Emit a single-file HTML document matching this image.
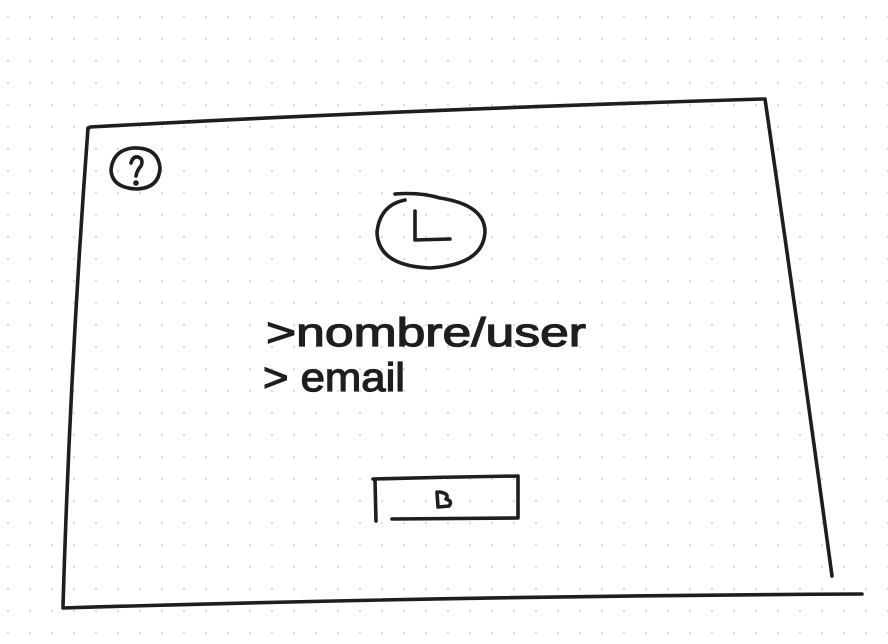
<!DOCTYPE html>
<html><head><meta charset="utf-8"><style>
html,body{margin:0;padding:0;background:#fff;width:888px;height:644px;overflow:hidden}
svg{display:block}
</style></head><body>
<svg width="888" height="644" viewBox="0 0 888 644" xmlns="http://www.w3.org/2000/svg">
<defs><pattern id="d" x="-3" y="6" width="22" height="22" patternUnits="userSpaceOnUse"><circle cx="11" cy="11" r="1.2" fill="#dcdcdc"/></pattern></defs>
<rect width="888" height="644" fill="url(#d)"/>
<g fill="none" stroke="#1e1e1e" stroke-width="3.6" stroke-linecap="round" stroke-linejoin="round">
<path d="M88 129 L90 127 Q400 110 763 99"/>
<path d="M765 99 Q800 340 832 576"/>
<path d="M88 128 Q70 370 63 606"/>
<path d="M63 608 Q460 596 862 594"/>
<path d="M133 148 Q113 150 111 170 Q112 188 137 189 Q159 188 160 168 Q158 147 133 148"/>
<path d="M131 163 Q133 156 138 157 Q144 159 141 166 Q137 170 136 176"/>
<circle cx="136" cy="183" r="1" fill="#1e1e1e"/>
<path d="M395 194 Q420 192 440 198 Q485 205 485 232 Q483 265 430 268 Q378 266 377 232 Q380 205 405 200"/>
<path d="M415 211 L415 240 L450 239"/>
<path d="M373 479 Q445 477 518 476 L518 518 L392 519"/>
<path d="M375 480 L376 521"/>
<path d="M437 492 L438 507 L449 506 Q453 501 446 499 Q450 494 440 492"/>
</g>
<g font-family="Liberation Sans, sans-serif" fill="#1e1e1e" stroke="#1e1e1e" stroke-width="1.2">
<text x="266" y="346" font-size="40" textLength="320" lengthAdjust="spacingAndGlyphs">&gt;nombre/user</text>
<text x="263" y="391" font-size="40" textLength="142" lengthAdjust="spacingAndGlyphs">&gt; email</text>
</g>
</svg>
</body></html>
